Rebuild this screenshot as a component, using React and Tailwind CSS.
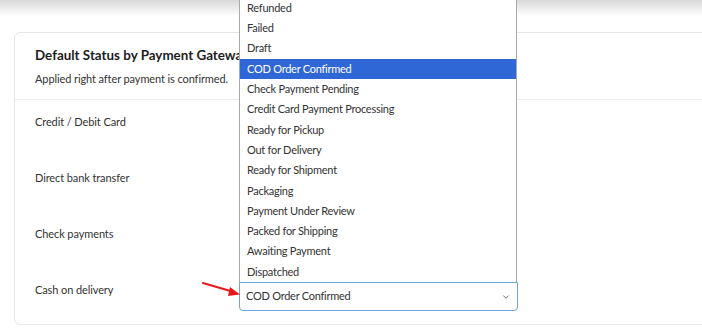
import { ChevronDown } from 'lucide-react'

const statuses = [
  'Refunded',
  'Failed',
  'Draft',
  'COD Order Confirmed',
  'Check Payment Pending',
  'Credit Card Payment Processing',
  'Ready for Pickup',
  'Out for Delivery',
  'Ready for Shipment',
  'Packaging',
  'Payment Under Review',
  'Packed for Shipping',
  'Awaiting Payment',
  'Dispatched',
]

const gateways = ['Credit / Debit Card', 'Direct bank transfer', 'Check payments', 'Cash on delivery']

function StatusList({ selected }) {
  return (
    <ul className="absolute bottom-full left-0 w-[278px] border border-b-0 border-[#a9a9a9] bg-white text-[11px] tracking-[-0.25px] text-[#333]">
      {statuses.map((status) => (
        <li
          key={status}
          className={
            status === selected
              ? 'h-[20.3px] bg-[#2f67d6] pl-[7px] leading-[20px] text-white'
              : 'h-[20.3px] pl-[7px] leading-[20px]'
          }
        >
          {status}
        </li>
      ))}
    </ul>
  )
}

function Arrow() {
  return (
    <svg className="absolute left-[-37px] top-[0px]" width="40" height="16" viewBox="0 0 40 16">
      <line x1="1" y1="1" x2="32" y2="10" stroke="#e8191c" strokeWidth="2" strokeLinecap="round" />
      <polygon points="38,12.5 28,5 26,14" fill="#e8191c" />
    </svg>
  )
}

export default function App() {
  return (
    <div className="relative h-[336px] w-[702px] overflow-hidden bg-white font-['Lato','Noto_Sans',sans-serif]">
      <div className="h-[16px] bg-gradient-to-b from-[#d9d9d9] to-white" />
      <div className="ml-[14px] mt-[16px] w-[720px] rounded-[6px] border border-[#e6e6e6] bg-white">
        <div className="border-b border-[#ededed] px-[20px] pb-[12px] pt-[13px]">
          <h2 className="text-[13.4px] font-bold leading-[18px] text-[#1d1d1d]">
            Default Status by Payment Gateway
          </h2>
          <p className="mt-[7px] text-[11px] leading-[16px] tracking-[-0.1px] text-[#333]">
            Applied right after payment is confirmed.
          </p>
        </div>
        <div>
          {gateways.map((gateway, index) => (
            <div key={gateway} className="flex h-[56px] items-start pt-[14px]">
              <div className="w-[224px] pl-[20px] text-[11px] leading-[15px] tracking-[-0.1px] text-[#333]">{gateway}</div>
              {index === gateways.length - 1 ? (
                <div className="relative">
                  <StatusList selected="COD Order Confirmed" />
                  <Arrow />
                  <div className="flex h-[29px] w-[279px] items-center justify-between rounded-b-[4px] border border-[#6ea2e3] pl-[6px] pr-[6px] text-[11px] tracking-[-0.25px] text-[#333]">
                    <span>COD Order Confirmed</span>
                    <ChevronDown size={10} strokeWidth={2} className="text-[#555]" />
                  </div>
                </div>
              ) : null}
            </div>
          ))}
        </div>
      </div>
    </div>
  )
}
